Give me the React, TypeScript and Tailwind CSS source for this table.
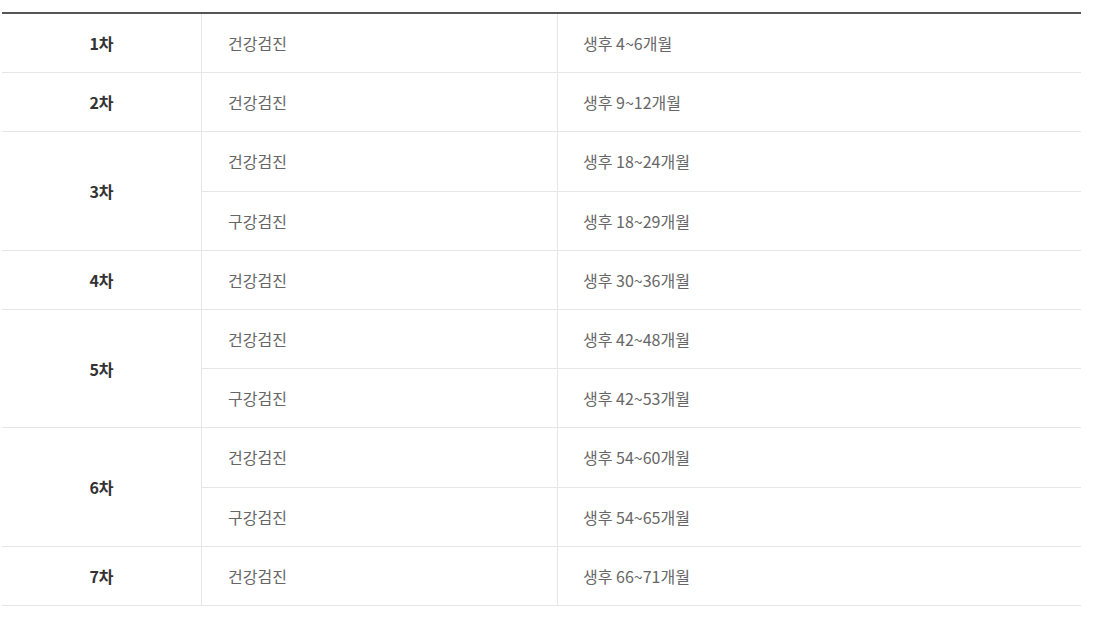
import React from 'react';

type Row = { round: string; items: { type: string; age: string }[] };

const rows: Row[] = [
  { round: '1차', items: [{ type: '건강검진', age: '생후 4~6개월' }] },
  { round: '2차', items: [{ type: '건강검진', age: '생후 9~12개월' }] },
  {
    round: '3차',
    items: [
      { type: '건강검진', age: '생후 18~24개월' },
      { type: '구강검진', age: '생후 18~29개월' },
    ],
  },
  { round: '4차', items: [{ type: '건강검진', age: '생후 30~36개월' }] },
  {
    round: '5차',
    items: [
      { type: '건강검진', age: '생후 42~48개월' },
      { type: '구강검진', age: '생후 42~53개월' },
    ],
  },
  {
    round: '6차',
    items: [
      { type: '건강검진', age: '생후 54~60개월' },
      { type: '구강검진', age: '생후 54~65개월' },
    ],
  },
  { round: '7차', items: [{ type: '건강검진', age: '생후 66~71개월' }] },
];

const App: React.FC = () => {
  return (
    <div className="w-[1097px] h-[618px] bg-white pt-[12px] pl-[2px] font-['Noto_Sans_CJK_KR','Noto_Sans',sans-serif] text-[16px]">
      <div className="w-[1079px] border-t-2 border-[#555555] grid grid-cols-[200px_356px_1fr] auto-rows-[59.2px]">
        {rows.map((row) => (
          <React.Fragment key={row.round}>
            <div
              className={`flex items-center justify-center border-b border-r border-[#e6e6e6] font-bold text-[#333333] ${
                row.items.length === 2 ? 'row-span-2' : ''
              }`}
            >
              {row.round}
            </div>
            {row.items.map((item, i) => (
              <React.Fragment key={i}>
                <div className="flex items-center pl-[26px] border-b border-r border-[#e6e6e6] text-[#666666]">
                  {item.type}
                </div>
                <div className="flex items-center pl-[25px] border-b border-[#e6e6e6] text-[#666666]">
                  {item.age}
                </div>
              </React.Fragment>
            ))}
          </React.Fragment>
        ))}
      </div>
    </div>
  );
};

export default App;
